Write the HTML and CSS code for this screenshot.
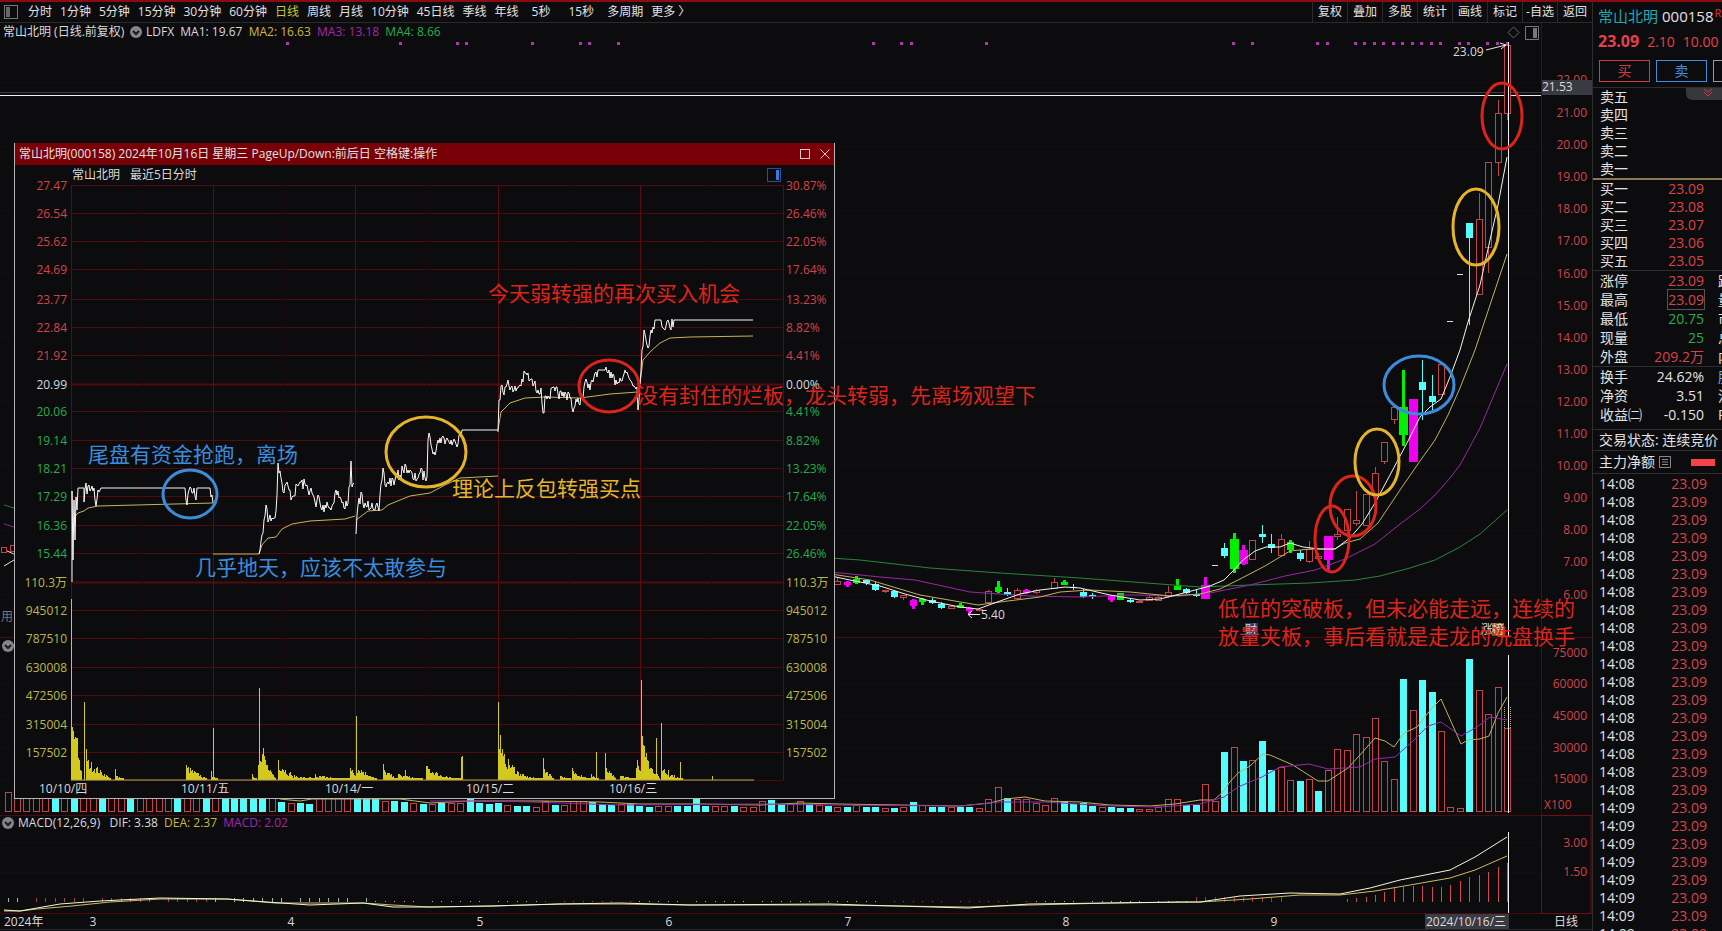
FILE: index.html
```html
<!DOCTYPE html>
<html lang="zh-CN">
<head>
<meta charset="utf-8">
<title>常山北明 000158</title>
<link rel="stylesheet" href="styles.css">
</head>
<body>
<div class="app">
  <main class="workspace">
    <nav class="toolbar">
      <svg class="toolbar-icon" viewBox="0 0 14 14" aria-hidden="true"><rect x=".5" y=".5" width="13" height="13"/><rect class="solid" x="2" y="2" width="4" height="10"/></svg>
      <div class="periods">
        <button>分时</button><button>1分钟</button><button>5分钟</button><button>15分钟</button><button>30分钟</button><button>60分钟</button><button class="active">日线</button><button>周线</button><button>月线</button><button>10分钟</button><button>45日线</button><button>季线</button><button>年线</button><button class="seconds">5秒</button><button class="seconds">15秒</button><button>多周期</button><button>更多 〉</button>
      </div>
      <div class="tools">
        <button>复权</button><button>叠加</button><button>多股</button><button>统计</button><button>画线</button><button>标记</button><button>-自选</button><button>返回</button>
      </div>
    </nav>
    <div class="stage">
      <svg class="chart" id="daily" viewBox="0 23 1592 908"></svg>
      <section class="popup">
        <header class="popup-bar">
          <h2>常山北明(000158) 2024年10月16日 星期三 PageUp/Down:前后日 空格键:操作</h2>
          <button aria-label="最大化"><svg viewBox="0 0 10 10"><rect x=".5" y=".5" width="9" height="9"/></svg></button>
          <button aria-label="关闭"><svg viewBox="0 0 10 10"><path d="M.5 .5 9.500 9.500M9.500 .5 .5 9.500"/></svg></button>
        </header>
        <svg class="chart" id="intraday" viewBox="15 165 819 633"></svg>
      </section>
      <svg class="chart notes" id="notes" viewBox="0 23 1592 908"></svg>
    </div>
  </main>
  <aside class="quote">
    <div class="name"><span class="cyan">常山北明</span><span>000158</span><sup>R</sup></div>
    <div class="price"><b>23.09</b><span>2.10</span><span>10.00</span></div>
    <div class="trade"><button class="buy">买</button><button class="sell">卖</button><button class="other" aria-label="更多"></button></div>
    <div class="block asks">
      <svg class="fold" viewBox="0 0 44 12" aria-hidden="true"><path class="tab" d="M0 0H44V12H7Q0 12 0 5Z"/><path d="M18 1 22 4 26 1M18 4 22 8 26 4"/></svg>
      <table class="book"><tbody><tr><th>卖五</th></tr><tr><th>卖四</th></tr><tr><th>卖三</th></tr><tr><th>卖二</th></tr><tr><th>卖一</th></tr></tbody></table>
    </div>
    <div class="block bids">
      <table class="book"><tbody><tr><th>买一</th><td>23.09</td></tr><tr><th>买二</th><td>23.08</td></tr><tr><th>买三</th><td>23.07</td></tr><tr><th>买四</th><td>23.06</td></tr><tr><th>买五</th><td>23.05</td></tr></tbody></table>
    </div>
    <div class="block">
      <table class="stats"><tbody><tr><th>涨停</th><td>23.09</td><th>跌</th></tr><tr><th>最高</th><td><span class="boxed">23.09</span></td><th>量</th></tr><tr><th>最低</th><td class="green">20.75</td><th>市</th></tr><tr><th>现量</th><td class="green">25</td><th>总</th></tr><tr><th>外盘</th><td>209.2万</td><th>内</th></tr></tbody></table>
    </div>
    <div class="block">
      <table class="stats plain"><tbody><tr><th>换手</th><td>24.62%</td><th class="blue">股</th></tr><tr><th>净资</th><td>3.51</td><th>流</th></tr><tr><th>收益㈡</th><td>-0.150</td><th>P</th></tr></tbody></table>
    </div>
    <div class="block line">交易状态: 连续竞价</div>
    <div class="block line flow">主力净额<svg class="doc" viewBox="0 0 12 12" aria-hidden="true"><path d="M.5 .5H11.500V11.500H.5ZM3 3.500H9M3 6H9M3 8.500H9"/></svg><i></i></div>
    <table class="ticks"><tbody id="ticks"></tbody></table>
  </aside>
</div>
<script src="app.js"></script>
</body>
</html>
```

FILE: styles.css
```css
* { box-sizing: border-box; }

body {
  margin: 0;
  background: #0c0c0e;
  color: #e2e2e2;
  font: 12px/18px "Open Sans", "Noto Sans CJK SC", sans-serif;
  overflow: hidden;
}

button {
  margin: 0;
  padding: 0;
  border: 0;
  background: none;
  color: inherit;
  font: inherit;
  white-space: nowrap;
}

.app {
  display: flex;
  height: 100vh;
  border-top: 2px solid #8c0a10;
}

.workspace {
  display: flex;
  flex-direction: column;
  flex: 1;
  min-width: 0;
}

/* Toolbar */
.toolbar {
  display: flex;
  align-items: center;
  height: 21px;
  padding-left: 4px;
  border-bottom: 1px solid #2a2a2c;
}
.toolbar-icon { width: 14px; height: 14px; fill: none; stroke: #777; }
.toolbar-icon .solid { fill: #666; stroke: none; }
.periods { display: flex; gap: 8px; margin-left: 10px; }
.periods .active { color: #c8c832; }
.periods .seconds { padding: 0 5px; }
.tools { display: flex; margin-left: auto; }
.tools button { width: 35px; height: 20px; border-left: 1px solid #2a2a2c; }

/* Charts */
.stage { position: relative; flex: 1; overflow: hidden; }
.chart { display: block; width: 100%; height: auto; }
.chart text { font-size: 12px; fill: #dadada; white-space: pre; }
.chart .end { text-anchor: end; }
.chart .mid { text-anchor: middle; }
.chart .t-red { fill: #d0444a; }
.chart .t-green { fill: #26ac4c; }
.chart .t-yellow { fill: #bcb848; }
.chart .t-gold { fill: #ccb840; }
.chart .t-purple { fill: #a824b0; }
.chart .t-gray { fill: #777; }
.notes { position: absolute; inset: 0; }
.chart .note { font-size: 21px; }
.chart .note.red { fill: #dc241c; }
.chart .note.blue { fill: #3c8cdc; }
.chart .note.yellow { fill: #e6b428; }

/* Five-day window */
.popup {
  position: absolute;
  left: 14px;
  top: 120px;
  width: 821px;
  background: #0c0c0e;
  border: 1px solid #b4b4b4;
  border-top: 0;
}
.popup-bar {
  display: flex;
  align-items: center;
  gap: 10px;
  height: 22px;
  padding: 0 4px;
  background: #780006;
}
.popup-bar h2 { flex: 1; margin: 0; font-size: 12px; font-weight: 400; }
.popup-bar svg { display: block; width: 10px; height: 10px; fill: none; stroke: #e0c8c8; }

/* Quote panel */
.quote {
  flex: 0 0 130px;
  border-left: 1px solid #2e2e30;
  overflow: hidden;
  font-size: 14px;
  white-space: nowrap;
}
.name { display: flex; gap: 4px; height: 27px; padding: 3px 0 0 5px; font-size: 15px; line-height: 22px; }
.name sup { margin-left: -3px; font-size: 11px; line-height: 16px; color: #e0303a; }
.cyan { color: #1eaab4; }
.price { display: flex; gap: 8px; height: 26px; padding-left: 5px; line-height: 25px; color: #e6404a; }
.price b { font-size: 16px; }
.trade { display: flex; gap: 6px; padding: 5px 0 5px 6px; }
.trade button { flex: 0 0 51px; height: 22px; border: 1px solid; }
.trade .buy { color: #d23c40; }
.trade .sell { color: #468cdc; }
.trade .other { color: #999; }
.block { border-top: 1px solid #2e2e30; }
.asks { position: relative; height: 91px; }
.fold { position: absolute; right: -8px; top: 0; width: 44px; height: 12px; fill: none; stroke: #d23c40; }
.fold .tab { fill: #38383c; stroke: none; }
.bids { border-top: 2px solid #8c7850; }
table { border-collapse: collapse; table-layout: fixed; width: 140px; }
th, td { padding: 0; font-weight: 400; }
th { width: 58px; padding-left: 7px; text-align: left; }
td { width: 53px; text-align: right; color: #d8444a; }
td + th { width: 29px; padding-left: 14px; }
.book tr { height: 18px; }
.stats tr { height: 19px; }
.stats td { direction: rtl; unicode-bidi: plaintext; }
.book td { padding-right: 29px; width: 82px; }
.plain td { color: #e2e2e2; }
.plain { margin-bottom: 5px; }
td.green { color: #26ac4c; }
th.blue { color: #6ab4e6; }
.boxed { outline: 1px solid #555; }
.line { height: 21px; padding-left: 6px; line-height: 20px; }
.flow { display: flex; align-items: center; height: 24px; border-bottom: 1px solid #2e2e30; }
.doc { width: 12px; height: 12px; margin-left: 4px; fill: none; stroke: #888; }
.flow i { width: 24px; height: 7px; margin-left: 20px; background: #f0444a; }
.ticks { margin-top: 1px; }
.ticks tr { height: 18px; }
.ticks th { width: 60px; padding-left: 6px; }
.ticks td { width: 80px; padding-right: 26px; }
```

FILE: app.js
```js
const NS = 'http://www.w3.org/2000/svg';

function el(parent, tag, attrs, text) {
  const node = document.createElementNS(NS, tag);
  for (const key in attrs) node.setAttribute(key, attrs[key]);
  if (text !== undefined) node.textContent = text;
  parent.appendChild(node);
  return node;
}
const label = (p, x, y, s, cls) => el(p, 'text', { x, y: y + 5, class: cls || '' }, s);
const path = (p, d, stroke, w) => el(p, 'path', { d, stroke, fill: 'none', 'stroke-width': w || 1 });
const poly = (p, points, stroke, w) => el(p, 'polyline', { points, stroke, fill: 'none', 'stroke-width': w || 1 });
const box = (p, x, y, w, h, fill) => el(p, 'rect', { x, y, width: w, height: h, fill });
const frame = (p, x, y, w, h, stroke) => el(p, 'rect', { x: x + 0.5, y: y + 0.5, width: w, height: h, fill: '#0c0c0e', stroke });

let seed = 7;
function rand() {
  seed = (seed * 16807) % 2147483647;
  return seed / 2147483647;
}

const RED = '#c04448', CYAN = '#54fcfc', GREEN = '#00f000', MAG = '#f000f0';
const slot = k => Math.floor(1507.5 - 9.43 * k);

/* ---------- daily chart ---------- */
const daily = document.getElementById('daily');

[82, 146, 210, 273, 337, 401, 465, 530, 594, 684, 716, 748, 779, 842, 872]
  .forEach(y => path(daily, `M0 ${y}.5H1541`, '#180c10'));
path(daily, 'M0 637.500H1592M0 815.500H1592', '#4a0a0e');
path(daily, 'M0 913.500H1592', '#4a0a0e');
path(daily, 'M0 929.500H1592', '#2a2a2c');
path(daily, 'M1541.500 23V913', '#500a12');
path(daily, 'M1541.500 815.500H1591V913.500H1541.500Z', '#780a10');

path(daily, 'M0 92.500H1541', '#3c3c3e');
path(daily, 'M0 95.500H1541', '#f0f0f0');

[287, 400, 457, 466, 532, 580, 589, 618, 873, 901, 911, 986, 1233, 1252, 1317, 1327, 1355, 1364, 1374, 1383, 1393,
  1402, 1412, 1421, 1431, 1440, 1459, 1468, 1487, 1497, 1507].forEach(x => box(daily, x - 1, 42, 3, 3, '#b432b4'));

/* [slot, kind, body top, body bottom, high, low] */
const candles = [
  [0, 'r', 45, 113, 45, 120], [1, 'r', 113, 162, 100, 176], [2, 'r', 162, 247, 162, 273], [3, 'r', 219, 294, 193, 294],
  [4, 'c', 223, 238, 223, 325], [5, 'd', 274], [6, 'd', 321], [7, 'r', 364, 394, 364, 394], [8, 'c', 396, 402, 375, 410],
  [9, 'c', 382, 390, 360, 420], [10, 'm', 399, 462, 399, 462], [11, 'g', 407, 435, 370, 446], [12, 'r', 407, 419, 407, 424],
  [13, 'r', 442, 461, 442, 464], [14, 'r', 473, 494, 467, 494], [15, 'r', 494, 525, 494, 525], [16, 'r', 520, 523, 491, 526],
  [17, 'r', 509, 530, 509, 530], [18, 'r', 534, 536, 517, 540], [19, 'm', 536, 560, 536, 570], [20, 'r', 556, 558, 553, 560],
  [21, 'r', 549, 561, 541, 563], [22, 'c', 553, 559, 550, 561], [23, 'g', 542, 550, 540, 553], [24, 'r', 539, 555, 534, 557],
  [25, 'c', 544, 548, 534, 553], [26, 'c', 534, 537, 525, 543], [27, 'r', 540, 559, 540, 559], [28, 'm', 550, 564, 545, 565],
  [29, 'g', 539, 569, 533, 573], [30, 'c', 548, 556, 543, 558], [31, 'd', 565], [32, 'm', 585, 599, 577, 599],
  [33, 'c', 594, 596, 590, 597], [34, 'c', 589, 593, 588, 594], [35, 'g', 586, 590, 579, 590], [36, 'r', 592, 596, 586, 598],
  [37, 'r', 597, 600, 595, 601], [38, 'r', 597, 600, 595, 601], [39, 'r', 601, 602, 601, 603], [40, 'c', 600, 602, 598, 603],
  [41, 'g', 593, 600, 593, 600], [42, 'm', 596, 600, 595, 602], [44, 'c', 595, 596, 593, 599], [45, 'c', 592, 597, 589, 598],
  [46, 'c', 587, 588, 584, 590], [47, 'g', 582, 585, 580, 585], [48, 'r', 582, 588, 578, 588], [50, 'r', 590, 592, 589, 594],
  [51, 'm', 590, 593, 589, 594], [52, 'r', 590, 598, 588, 600], [53, 'c', 592, 595, 588, 596], [54, 'g', 587, 592, 581, 593],
  [55, 'r', 591, 602, 590, 603], [56, 'r', 609, 610, 609, 611], [57, 'm', 608, 611, 607, 614], [58, 'g', 605, 608, 603, 608],
  [59, 'r', 606, 608, 606, 608], [60, 'c', 604, 608, 602, 609], [61, 'c', 600, 603, 598, 604], [62, 'g', 599, 602, 598, 605],
  [63, 'm', 600, 606, 599, 609], [64, 'r', 595, 597, 595, 600], [65, 'c', 591, 597, 590, 598], [66, 'r', 590, 591, 590, 593],
  [67, 'c', 584, 590, 582, 591], [68, 'c', 580, 583, 579, 585], [69, 'g', 579, 583, 576, 584], [70, 'm', 582, 585, 581, 587],
  [71, 'r', 581, 584, 577, 585]
];
candles.forEach(([k, kind, top, bottom, high, low]) => {
  const x = slot(k);
  if (kind === 'd') { box(daily, x - 3, top, 6, 1, '#ddd'); return; }
  if (kind === 'r') {
    path(daily, `M${x + 0.5} ${high}V${low}`, RED);
    frame(daily, x - 3, top, 6, Math.max(bottom - top, 1), RED);
    return;
  }
  const wide = kind !== 'c' && bottom - top > 12;
  const fill = { c: CYAN, g: GREEN, m: MAG }[kind];
  if (kind === 'c') box(daily, x, high, 1, low - high, fill);
  else box(daily, x - 1, high, 3, low - high, fill);
  box(daily, x - (wide ? 4 : 3), top, wide ? 9 : 7, bottom - top, fill);
});

poly(daily, '831,558 860,560 930,568 1000,573 1080,578 1160,584 1200,587 1250,585 1310,583 1355,580 1380,576 1410,568 1435,560 1460,547 1480,534 1507,510', '#2a8438');
poly(daily, '831,572 880,577 915,580 970,592 1000,594 1030,596 1080,597 1130,595 1180,596 1210,593 1250,585 1285,576 1315,570 1345,559 1375,544 1400,524 1420,509 1435,495 1450,478 1460,465 1480,428 1507,364', '#9828a4');
poly(daily, '831,574 870,580 920,595 978,605 1000,602 1040,597 1060,592 1090,590 1130,592 1170,596 1200,594 1220,589 1240,579 1265,566 1290,551 1310,549 1335,549 1345,543 1360,539 1378,523 1400,490 1420,461 1435,440 1448,415 1460,388 1475,350 1490,305 1507,254', '#c0b05c');
poly(daily, '831,576 850,580 880,586 905,594 930,601 960,607 978,609 1000,601 1020,594 1040,590 1065,587 1080,588 1110,595 1140,600 1160,599 1180,594 1210,586 1224,580 1233,571 1243,560 1255,551 1266,547 1280,547 1290,543 1303,547 1320,549 1335,549 1350,538 1362,524 1375,503 1390,475 1408,441 1420,417 1430,407 1441,399 1450,377 1460,350 1468,322 1480,285 1490,240 1498,205 1507,157', '#f4f4e8');

/* left edge, beside the floating window */
frame(daily, 1, 547, 5, 5, RED);
frame(daily, 10, 545, 5, 6, RED);
path(daily, 'M4 505 14 508', '#2a7c34');
path(daily, 'M4 524 14 527', '#8a2298');
path(daily, 'M4 566 14 560M7 551 14 554', '#e0e0d0');

/* volume: [kind, top] from the latest day backwards */
const volumes = ('r728 r687 r714 r690 c659 r808 r807 r731 c692 c680 r710 c679 r779 r761 r718 r737 r734 r750 r749 r770 c791 r779 c781 r780 r767 c770 c741 r760 c761 r747 c752 r801 r784 ' +
  'c805 c805 r799 r799 r807 r809 r809 c808 c808 c807 r807 c806 c803 c804 c801 r798 r805 r803 r799 r799 c798 r787 r799 r808 c807 c807 r807 c807 c807 r805 c802 r807 c808 r808 c807 c807 r805 c807 r807 ' +
  'c806 r805 c804 r801 r804 c804 c800 r801 r807 r807 c806 r806 r806 c806 c799 c806 c806 r806 r806 c807 c806 c804 r804 c805 c804 c802 r801 r801 r805 c805 r801 r807 c806 c806 r805 c803 c804 c803 c799 r803 r803 c803 r804 c804 ' +
  'r803 c802 c801 r801 c798 c798 c798 r798 r798 r798 r798 c804 c803 r803 c802 r798 c798 c798 c798 c798 c798 r798 c798 r798 r798 c798 r798 r798 r798 r798 c798 r798 r798 c798 r798 r798 c798 r798 c798 r798 r798 r798 r793 r792').split(' ');
volumes.forEach((item, k) => {
  const top = Number(item.slice(1)), x = slot(k);
  if (item[0] === 'c') box(daily, x - 3, top, 7, 812 - top, CYAN);
  else frame(daily, x - 3, top, 6, 811 - top, RED);
});
path(daily, 'M1504.500 707V728M1510.500 707V728', '#b8a87a').setAttribute('stroke-dasharray', '1 1');
poly(daily, '280,799 300,801 312,799 400,799 430,803 470,801 540,801 600,802 640,804 700,804 760,805 800,803 838,804 960,806 990,803 1005,799 1025,797 1045,801 1080,802 1110,805 1150,806 1175,804 1200,800 1214,800 1224,791 1229,783 1238,773 1250,766 1263,754 1270,755 1293,765 1310,776 1318,781 1328,781 1348,768 1360,755 1375,738 1385,741 1394,747 1404,733 1417,727 1432,708 1441,699 1461,744 1468,740 1480,739 1489,736 1498,713 1507,697', '#c0b05c');
poly(daily, '430,801 500,801 620,805 760,804 838,805 960,806 1000,802 1045,802 1110,806 1160,807 1200,804 1224,797 1238,787 1262,777 1280,767 1309,764 1328,769 1360,767 1375,759 1395,757 1413,741 1428,726 1441,722 1461,736 1477,727 1490,717 1507,720', '#9828a4');

/* MACD */
[863, 867, 872, 875, 877, 881, 885, 887, 887, 886, 886, 887, 888, 892, 895, 897, 898, 899].forEach((top, k) =>
  box(daily, slot(k), top, 1, 902 - top, '#d04a4e'));
for (let k = 24; k < 34; k++) box(daily, slot(k), 897, 1, 5, '#a03434');
for (let k = 34; k < 160; k++) {
  if (k % 7 === 3) continue;
  const warm = (k > 137 && k < 157) || (k > 92 && k < 103) || (k > 50 && k < 66);
  box(daily, slot(k), k > 120 ? 898 : 901, 1, k > 120 ? 4 : 1, warm ? '#a84440' : '#8ac0b8');
}
poly(daily, '4,911 20,911 37,909 72,906 110,902 160,899 227,899 275,903 310,903 363,903 393,905 430,907 492,906 560,904 620,904 690,905 830,905 968,907 1030,905 1110,903 1200,902 1250,899 1300,895 1340,895 1375,891 1410,885 1450,878 1475,870 1507,856', '#ccbc5c');
poly(daily, '4,910 20,911 37,908 60,904 100,901 160,898 227,899 267,902 310,905 363,903 393,907 430,907 492,906 560,904 620,903 690,905 830,904 860,905 968,908 1030,904 1110,903 1180,902 1200,902 1240,896 1290,893 1340,894 1370,888 1400,880 1425,875 1450,870 1475,857 1507,837', '#f4f4e0');

path(daily, 'M1508.500 42V636M1508.500 655V813M1508.500 832V913', '#f0f0f0');

/* axis */
box(daily, 1425, 914, 84, 15, '#3a3a42');
['21.00', '20.00', '19.00', '18.00', '17.00', '16.00', '15.00', '14.00', '13.00', '12.00', '11.00', '10.00', '9.00', '8.00', '7.00', '6.00']
  .forEach((s, i) => label(daily, 1587, Math.round(112 + i * 32.1), s, 'end t-red'));
label(daily, 1587, 79, '22.00', 'end t-red');
box(daily, 1542, 80, 50, 15, '#3a3a42');
label(daily, 1542, 86, '21.53');
[['75000', 652], ['60000', 683], ['45000', 715], ['30000', 747], ['15000', 778], ['3.00', 842], ['1.50', 871]]
  .forEach(([s, y]) => label(daily, 1587, y, s, 'end t-red'));
label(daily, 1544, 804, 'X100', 't-red');
label(daily, 1554, 921, '日线');
label(daily, 4, 921, '2024年');
[['3', 93], ['4', 291], ['5', 480], ['6', 669], ['7', 848], ['8', 1066], ['9', 1274]]
  .forEach(([s, x]) => label(daily, x, 921, s, 'mid'));
label(daily, 1426, 921, '2024/10/16/三');

/* indicator captions */
function spans(x, y, parts) {
  const t = el(daily, 'text', { x, y: y + 4 });
  parts.forEach(([s, cls]) => el(t, 'tspan', { class: cls }, s));
}
function toggle(x, y) {
  el(daily, 'circle', { cx: x, cy: y, r: 6, fill: '#85858a' });
  path(daily, `M${x - 3} ${y - 1}l3 3 3-3`, '#1a1a1c', 2);
}
label(daily, 3, 31, '常山北明 (日线.前复权)');
toggle(136, 32);
spans(146, 32, [['LDFX  MA1: 19.67 ', ''], [' MA2: 16.63 ', 't-gold'], [' MA3: 13.18 ', 't-purple'], [' MA4: 8.66', 't-green']]);
label(daily, 1, 616, '用', 't-gray');
toggle(8, 646);
toggle(8, 823);
spans(18, 823, [['MACD(12,26,9)  ', ''], [' DIF: 3.38 ', ''], [' DEA: 2.37 ', 't-gold'], [' MACD: 2.02', 't-purple']]);

label(daily, 1453, 51, '23.09');
path(daily, 'M1486 50 1506 45M1500 43 1506 45 1501 49', '#e8e8e8');
label(daily, 981, 614, '5.40');
path(daily, 'M980 614.500H968M972 611 968 614.500 972 618', '#e8e8e8');
path(daily, 'M1508 32.500 1513.500 27 1519 32.500 1513.500 38Z', '#666');
path(daily, 'M1525.500 26.500H1538.500V39.500H1525.500Z', '#777');
box(daily, 1533, 28, 4, 10, '#777');
box(daily, 1245, 623, 13, 13, '#283c78');
label(daily, 1245, 629, '财');
label(daily, 1481, 629, '涨');
box(daily, 1492, 623, 12, 13, '#a05a14');
label(daily, 1492, 629, '榜');

/* ---------- five-day intraday chart ---------- */
const intra = document.getElementById('intraday');
const rows = [185, 213, 241, 269, 299, 327, 355, 384, 411, 440, 468, 496, 525, 553, 582, 610, 638, 667, 695, 724, 752];
rows.forEach(y => path(intra, `M71 ${y}.5H783`, '#520a0c', y === 384 || y === 582 ? 2 : 1));
path(intra, 'M71 780.500H783', '#520a0c');
[71, 213, 355, 498, 640, 783].forEach(x => path(intra, `M${x}.5 185V780`, '#5c0c0e'));
[142, 284, 426, 569, 711].forEach(x => path(intra, `M${x}.5 185V780`, '#180a0c'));

const prices = ['27.47', '26.54', '25.62', '24.69', '23.77', '22.84', '21.92', '20.99', '20.06', '19.14', '18.21', '17.29', '16.36', '15.44'];
const rates = ['30.87%', '26.46%', '22.05%', '17.64%', '13.23%', '8.82%', '4.41%', '0.00%', '4.41%', '8.82%', '13.23%', '17.64%', '22.05%', '26.46%'];
const lots = ['110.3万', '945012', '787510', '630008', '472506', '315004', '157502'];
rows.forEach((y, i) => {
  const cls = i < 7 ? 't-red' : i === 7 ? '' : i < 14 ? 't-green' : 't-yellow';
  label(intra, 67, y, i < 14 ? prices[i] : lots[i - 14], 'end ' + cls);
  label(intra, 786, y, i < 14 ? rates[i] : lots[i - 14], cls);
});
label(intra, 72, 174, '常山北明');
label(intra, 130, 174, '最近5日分时');
[['10/10/四', 39], ['10/11/五', 181], ['10/14/一', 325], ['10/15/二', 466], ['10/16/三', 609]]
  .forEach(([s, x]) => label(intra, x, 788, s));
path(intra, 'M767.500 168.500H780.500V181.500H767.500Z', '#2850a0');
box(intra, 776, 170, 3, 10, '#3c78dc');

/* average price */
['72,520 78,513 84,511 88,508 98,506 213,503', '213,554 259,554 262,545 268,538 276,537 282,529 292,524 310,521 345,519 355,516',
  '356,520 368,511 382,510 388,505 400,500 410,496 430,493 445,485 460,478 498,476', '498,430 501,412 510,403 525,398 545,397 580,398 610,394 638,392',
  '640,384 643,360 650,352 660,343 670,338 690,337 753,336'].forEach(p => poly(intra, p, '#c4b45c'));

/* last price: short jitter is added between the turning points */
function ticksLine(points) {
  const p = points.split(' ').map(s => s.split(',').map(Number));
  let d = `M${p[0]}`;
  for (let i = 1; i < p.length; i++) {
    const [x0, y0] = p[i - 1], [x1, y1] = p[i];
    const flat = Math.abs(y1 - y0) < 1;
    if (!flat) for (let x = x0 + 1; x < x1; x++) {
      const y = y0 + (y1 - y0) * (x - x0) / (x1 - x0) + (rand() - 0.5) * 12;
      d += `L${x} ${y.toFixed(0)}`;
    }
    d += `L${x1} ${y1}`;
  }
  path(intra, d, '#f8f8f8');
}
ticksLine('72,582 72,491 73,560 74,500 75,540 76,497 77,510 78,488 84,488 84,502 85,489 94,488 96,506 98,490 101,488 185,488 187,505 189,490 191,488 193,493 194,488 196,500 197,488 210,488 211,497 213,503');
ticksLine('259,554 262,535 264,520 266,505 268,522 270,515 275,518 277,495 278,463 281,478 283,492 286,484 292,497 300,482 306,486 312,493 316,507 318,495 322,510 327,502 331,510 336,490 342,503 347,506 350,485 351,461 352,487 354,483');
ticksLine('356,534 357,515 361,492 364,508 372,503 379,511 383,468 385,485 388,482 395,480 403,470 406,466 414,480 420,473 427,477 428,440 430,437 434,452 440,438 448,440 456,444 459,435 462,430 498,430');
ticksLine('498,432 499,400 502,385 504,395 508,380 513,392 520,385 526,373 530,380 538,390 541,388 543,413 546,396 555,391 562,396 569,393 571,398 573,412 577,402 582,398 585,382 590,390 595,373 598,370 605,370 610,378 616,380 618,382 625,370 630,380 637,387 638,410 640,380');
ticksLine('640,384 642,350 644,330 647,345 652,333 655,320 661,320 663,328 667,321 670,328 674,320 680,320 753,320');

/* volume bursts: [x, top, initial height after the peak, fade length] */
const bursts = [[71, 599, 50, 10], [73, 731, 48, 5], [75, 737, 46, 2], [77, 738, 40, 1], [84, 702, 0, 0], [86, 749, 18, 24], [91, 764, 5, 16],
  [115, 769, 4, 8], [186, 765, 12, 20], [211, 771, 4, 4], [213, 728, 4, 4], [252, 774, 4, 4], [258, 765, 20, 2], [259, 688, 32, 12],
  [263, 748, 18, 12], [278, 760, 16, 16], [290, 772, 4, 40], [315, 774, 4, 36], [350, 768, 10, 8], [356, 716, 12, 20], [383, 764, 9, 14],
  [398, 774, 5, 24], [405, 770, 4, 10], [426, 766, 12, 20], [440, 775, 4, 20], [461, 757, 0, 0], [462, 756, 0, 0], [498, 702, 46, 8],
  [500, 735, 24, 24], [520, 774, 5, 22], [543, 758, 12, 10], [560, 776, 4, 10], [572, 768, 8, 20], [591, 774, 5, 5], [596, 752, 2, 2],
  [605, 753, 11, 10], [620, 776, 4, 18], [636, 768, 18, 5], [641, 680, 38, 12], [643, 745, 22, 16], [656, 738, 6, 3],
  [661, 723, 14, 8], [668, 770, 6, 14], [680, 762, 0, 0], [712, 776, 0, 0]];
let bars = '';
bursts.forEach(([x, top, h, n]) => {
  bars += `M${x}.5 780V${top}`;
  for (let i = 1; i <= n; i++) {
    const height = Math.max(2, h * (1 - i / (n + 2)) * (0.6 + rand() * 0.7));
    bars += `M${x + i}.5 780V${(780 - height).toFixed(0)}`;
  }
});
path(intra, bars, '#d2c81e');
path(intra, 'M71 780H754', '#b4aa50');

/* ---------- annotations ---------- */
const notes = document.getElementById('notes');
[[190, 494, 27, 24, 'b'], [426, 452, 40, 35, 'y'], [609, 386, 30, 26, 'r'], [1502, 116, 20, 33, 'r'], [1476, 227, 23, 38, 'y'],
  [1419, 385, 35, 29, 'b'], [1353, 506, 23, 30, 'r'], [1332, 539, 17, 33, 'r'], [1377, 462, 22, 33, 'y']]
  .forEach(([cx, cy, rx, ry, c]) => el(notes, 'ellipse', {
    cx, cy, rx, ry, fill: 'none', 'stroke-width': 3, stroke: { b: '#3c8cdc', y: '#e6b428', r: '#dc241c' }[c]
  }));
[[488, 293, '今天弱转强的再次买入机会', 'red'], [637, 395, '没有封住的烂板，龙头转弱，先离场观望下', 'red'],
  [88, 454, '尾盘有资金抢跑，离场', 'blue'], [195, 567, '几乎地天，应该不太敢参与', 'blue'], [452, 488, '理论上反包转强买点', 'yellow'],
  [1218, 608, '低位的突破板，但未必能走远，连续的', 'red'], [1218, 636, '放量夹板，事后看就是走龙的洗盘换手', 'red']]
  .forEach(([x, y, s, c]) => el(notes, 'text', { x, y: y + 8, class: 'note ' + c }, s));

/* ---------- tick list ---------- */
const ticks = document.getElementById('ticks');
for (let i = 0; i < 26; i++) {
  const row = ticks.insertRow();
  const time = document.createElement('th');
  time.textContent = i < 18 ? '14:08' : '14:09';
  row.append(time);
  row.insertCell().textContent = '23.09';
}
```
